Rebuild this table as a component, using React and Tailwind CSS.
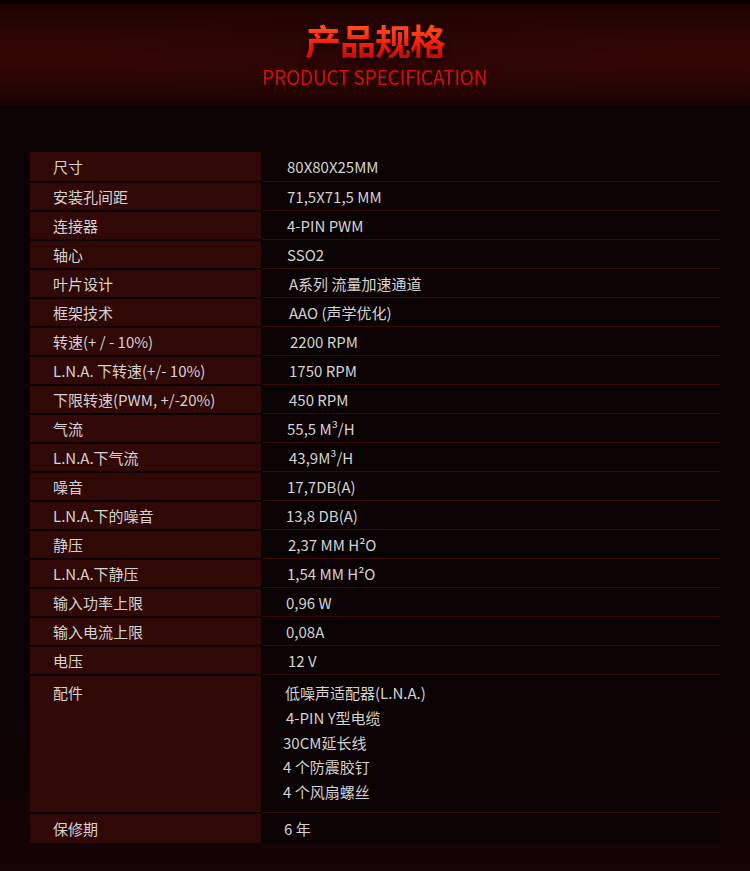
import React from "react";

const rows = [
  ["尺寸", "80X80X25MM", "pl-[25px]"],
  ["安装孔间距", "71,5X71,5 MM", "pl-[25px]"],
  ["连接器", "4-PIN PWM", "pl-[25px]"],
  ["轴心", "SSO2", "pl-[25px]"],
  ["叶片设计", "A系列 流量加速通道", "pl-[27px]"],
  ["框架技术", "AAO (声学优化)", "pl-[27px]"],
  ["转速(+ / - 10%)", "2200 RPM", "pl-[28px]"],
  ["L.N.A. 下转速(+/- 10%)", "1750 RPM", "pl-[27px]"],
  ["下限转速(PWM, +/-20%)", "450 RPM", "pl-[27px]"],
  ["气流", "55,5 M³/H", "pl-[25px]"],
  ["L.N.A.下气流", "43,9M³/H", "pl-[27px]"],
  ["噪音", "17,7DB(A)", "pl-[25px]"],
  ["L.N.A.下的噪音", "13,8 DB(A)", "pl-[24px]"],
  ["静压", "2,37 MM H²O", "pl-[26px]"],
  ["L.N.A.下静压", "1,54 MM H²O", "pl-[25px]"],
  ["输入功率上限", "0,96 W", "pl-[24px]"],
  ["输入电流上限", "0,08A", "pl-[24px]"],
  ["电压", "12 V", "pl-[26px]"],
];

const accessories = [
  ["低噪声适配器(L.N.A.)", "pl-[23px]"],
  ["4-PIN Y型电缆", "pl-[24px]"],
  ["30CM延长线", "pl-[21px]"],
  ["4 个防震胶钉", "pl-[21px]"],
  ["4 个风扇螺丝", "pl-[21px]"],
];

function Sep() {
  return (
    <div className="flex h-[2px]">
      <div className="w-[232px] bg-[#0a0203]" />
      <div className="flex-1 flex flex-col">
        <div className="h-[1px] bg-[#3a0907]" />
        <div className="h-[1px] bg-[#0a0203]" />
      </div>
    </div>
  );
}

function Row({ label, value, pad, h }) {
  return (
    <div className={`flex ${h}`}>
      <div className="w-[231px] bg-[#300805] flex items-center pl-[23px] pb-[1px]">{label}</div>
      <div className="w-[1px] bg-[#0a0203]" />
      <div className={`flex-1 bg-[#0a0203] flex items-center pb-[1px] ${pad}`}>{value}</div>
    </div>
  );
}

export default function App() {
  return (
    <div
      className="w-[750px] h-[871px] overflow-hidden bg-[linear-gradient(180deg,#0b0203_0%,#0b0203_80%,#160404_100%)]"
      style={{ fontFamily: '"Noto Sans CJK SC", "Noto Sans", sans-serif' }}
    >
      <div className="h-[4px] bg-[#0c0101]" />
      <div className="h-[101px] relative bg-[linear-gradient(180deg,#1c0302_0%,#2e0504_35%,#350604_55%,#250403_85%,#1a0302_100%)] flex flex-col items-center">
        <div className="absolute inset-0 bg-[radial-gradient(ellipse_at_center,rgba(0,0,0,0.15)_0%,rgba(0,0,0,0)_60%)]" />
        <div className="relative mt-[14px] h-[44px] flex items-center">
          <span
            className="text-[36px] font-bold leading-none tracking-[-1px] text-transparent bg-clip-text bg-[linear-gradient(180deg,#ff5a22_0%,#ff2a10_45%,#c40a06_100%)]"
            style={{ filter: "drop-shadow(0 3px 3px rgba(0,0,0,0.7))" }}
          >
            产品规格
          </span>
        </div>
        <div className="relative mt-[5px] text-[20px] leading-none text-[#d3110c] tracking-[-0.2px] inline-block scale-x-[0.955]">
          PRODUCT SPECIFICATION
        </div>
      </div>

      <div className="mt-[47px] mx-[30px] w-[690px] text-[15px] text-[#d4d2d2] leading-none">
        <Row label={rows[0][0]} value={rows[0][1]} pad={rows[0][2]} h="h-[29px]" />
        {rows.slice(1).map((r) => (
          <React.Fragment key={r[0]}>
            <Sep />
            <Row label={r[0]} value={r[1]} pad={r[2]} h="h-[27px]" />
          </React.Fragment>
        ))}
        <Sep />
        <div className="flex h-[136px]">
          <div className="w-[231px] bg-[#300805] pl-[23px] pt-[4px] leading-[25px]">配件</div>
          <div className="w-[1px] bg-[#0a0203]" />
          <div className="flex-1 bg-[#0a0203] pt-[5px] leading-[24.8px]">
            {accessories.map((a) => (
              <div key={a[0]} className={a[1]}>
                {a[0]}
              </div>
            ))}
          </div>
        </div>
        <Sep />
        <Row label="保修期" value="6 年" pad="pl-[22px]" h="h-[29px]" />
      </div>
    </div>
  );
}
